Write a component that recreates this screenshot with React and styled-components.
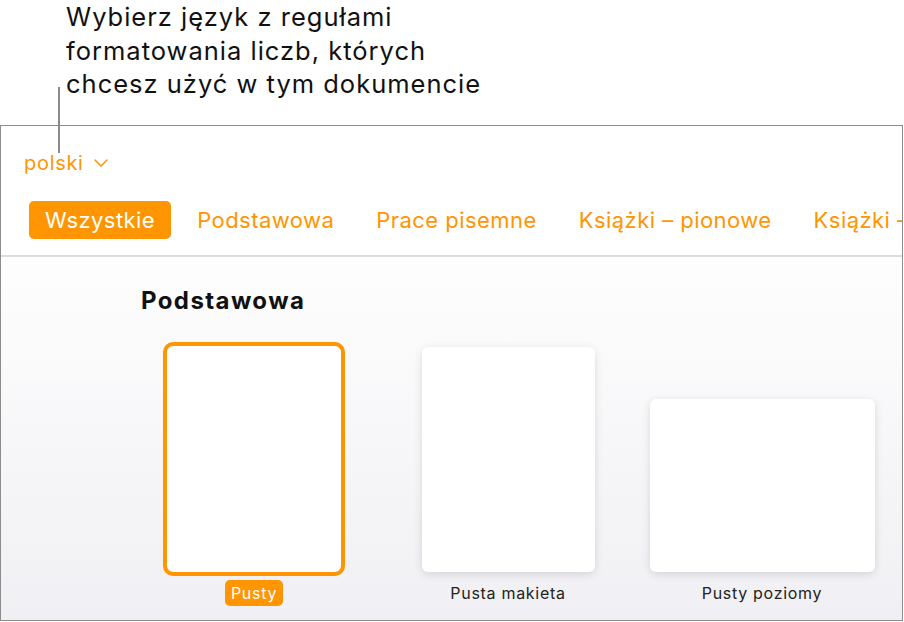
import React from 'react';
import styled, { createGlobalStyle } from 'styled-components';

const ORANGE = '#ff9500';

const GlobalStyle = createGlobalStyle`
  html, body {
    margin: 0;
    padding: 0;
    background: #fff;
  }
  body {
    font-family: Inter, "Noto Sans", sans-serif;
    -webkit-font-smoothing: antialiased;
  }
`;

const Page = styled.div`
  position: relative;
  width: 904px;
  height: 622px;
  overflow: hidden;
`;

const Callout = styled.div`
  height: 125px;
  padding-left: 66px;
  box-sizing: border-box;
`;

const CalloutText = styled.p`
  margin: 0;
  font-size: 25.5px;
  line-height: 33.5px;
  letter-spacing: 1px;
  color: #111;
`;

// leader line from the callout down to the language menu
const Leader = styled.div`
  position: absolute;
  left: 58px;
  top: 87px;
  width: 2px;
  height: 66px;
  background: #8a8a8a;
  z-index: 2;
`;

const Window = styled.div`
  width: 903px;
  height: 496px;
  box-sizing: border-box;
  border: 1px solid #8c8c8c;
  display: flex;
  flex-direction: column;
  overflow: hidden;
`;

const LangRow = styled.div`
  padding: 25px 0 0 23px;
  display: flex;
`;

const LangButton = styled.div`
  display: flex;
  align-items: center;
  gap: 10px;
  font-size: 20px;
  line-height: 24px;
  letter-spacing: 0.7px;
  color: ${ORANGE};
`;

const Tabs = styled.div`
  margin-top: 26px;
  padding: 0 0 16px 28px;
  display: flex;
  gap: 10px;
  white-space: nowrap;
  border-bottom: 2px solid #dcdcdc;
`;

const Tab = styled.div`
  flex: none;
  height: 38px;
  line-height: 38px;
  padding: 0 16px;
  font-size: 22px;
  letter-spacing: 0.45px;
  border-radius: 5px;
  color: ${(p) => (p.$active ? '#fff' : ORANGE)};
  background: ${(p) => (p.$active ? ORANGE : 'transparent')};
`;

const Content = styled.div`
  flex: 1;
  padding: 29px 0 0 140px;
  background: linear-gradient(#fefefe, #f0f0f4);
`;

const SectionTitle = styled.h2`
  margin: 0;
  font-size: 24px;
  line-height: 30px;
  font-weight: 700;
  letter-spacing: 1.4px;
  color: #111;
`;

const Templates = styled.div`
  margin-top: 30px;
  display: flex;
  align-items: flex-end;
  gap: 28px;
`;

const Template = styled.div`
  width: 226px;
  display: flex;
  flex-direction: column;
  align-items: center;
`;

const Thumb = styled.div`
  width: ${(p) => p.$w}px;
  height: ${(p) => p.$h}px;
  background: #fff;
  border-radius: 6px;
  box-shadow: ${(p) => (p.$selected ? 'none' : '0 2px 9px rgba(0, 0, 0, 0.13)')};
  outline: ${(p) => (p.$selected ? `4px solid ${ORANGE}` : 'none')};
`;

const Caption = styled.div`
  margin-top: 8px;
  height: 26px;
  line-height: 26px;
  padding: 0 6px;
  border-radius: 5px;
  font-size: 16px;
  letter-spacing: 0.7px;
  color: ${(p) => (p.$selected ? '#fff' : '#222')};
  background: ${(p) => (p.$selected ? ORANGE : 'transparent')};
`;

const Chevron = () => (
  <svg width="14" height="8" viewBox="0 0 14 8" fill="none">
    <path d="M1 1l6 6 6-6" stroke={ORANGE} strokeWidth="1.5" strokeLinecap="round" strokeLinejoin="round" />
  </svg>
);

const tabs = ['Wszystkie', 'Podstawowa', 'Prace pisemne', 'Książki – pionowe', 'Książki – poziome'];

const templates = [
  { name: 'Pusty', w: 174, h: 226, selected: true },
  { name: 'Pusta makieta', w: 173, h: 225 },
  { name: 'Pusty poziomy', w: 225, h: 173 },
];

export default function App() {
  return (
    <Page>
      <GlobalStyle />
      <Callout>
        <CalloutText>
          Wybierz język z regułami
          <br />
          formatowania liczb, których
          <br />
          chcesz użyć w tym dokumencie
        </CalloutText>
      </Callout>
      <Leader />
      <Window>
        <LangRow>
          <LangButton>
            polski <Chevron />
          </LangButton>
        </LangRow>
        <Tabs>
          {tabs.map((t, i) => (
            <Tab key={t} $active={i === 0}>
              {t}
            </Tab>
          ))}
        </Tabs>
        <Content>
          <SectionTitle>Podstawowa</SectionTitle>
          <Templates>
            {templates.map((t) => (
              <Template key={t.name}>
                <Thumb $w={t.w} $h={t.h} $selected={t.selected} />
                <Caption $selected={t.selected}>{t.name}</Caption>
              </Template>
            ))}
          </Templates>
        </Content>
      </Window>
    </Page>
  );
}
